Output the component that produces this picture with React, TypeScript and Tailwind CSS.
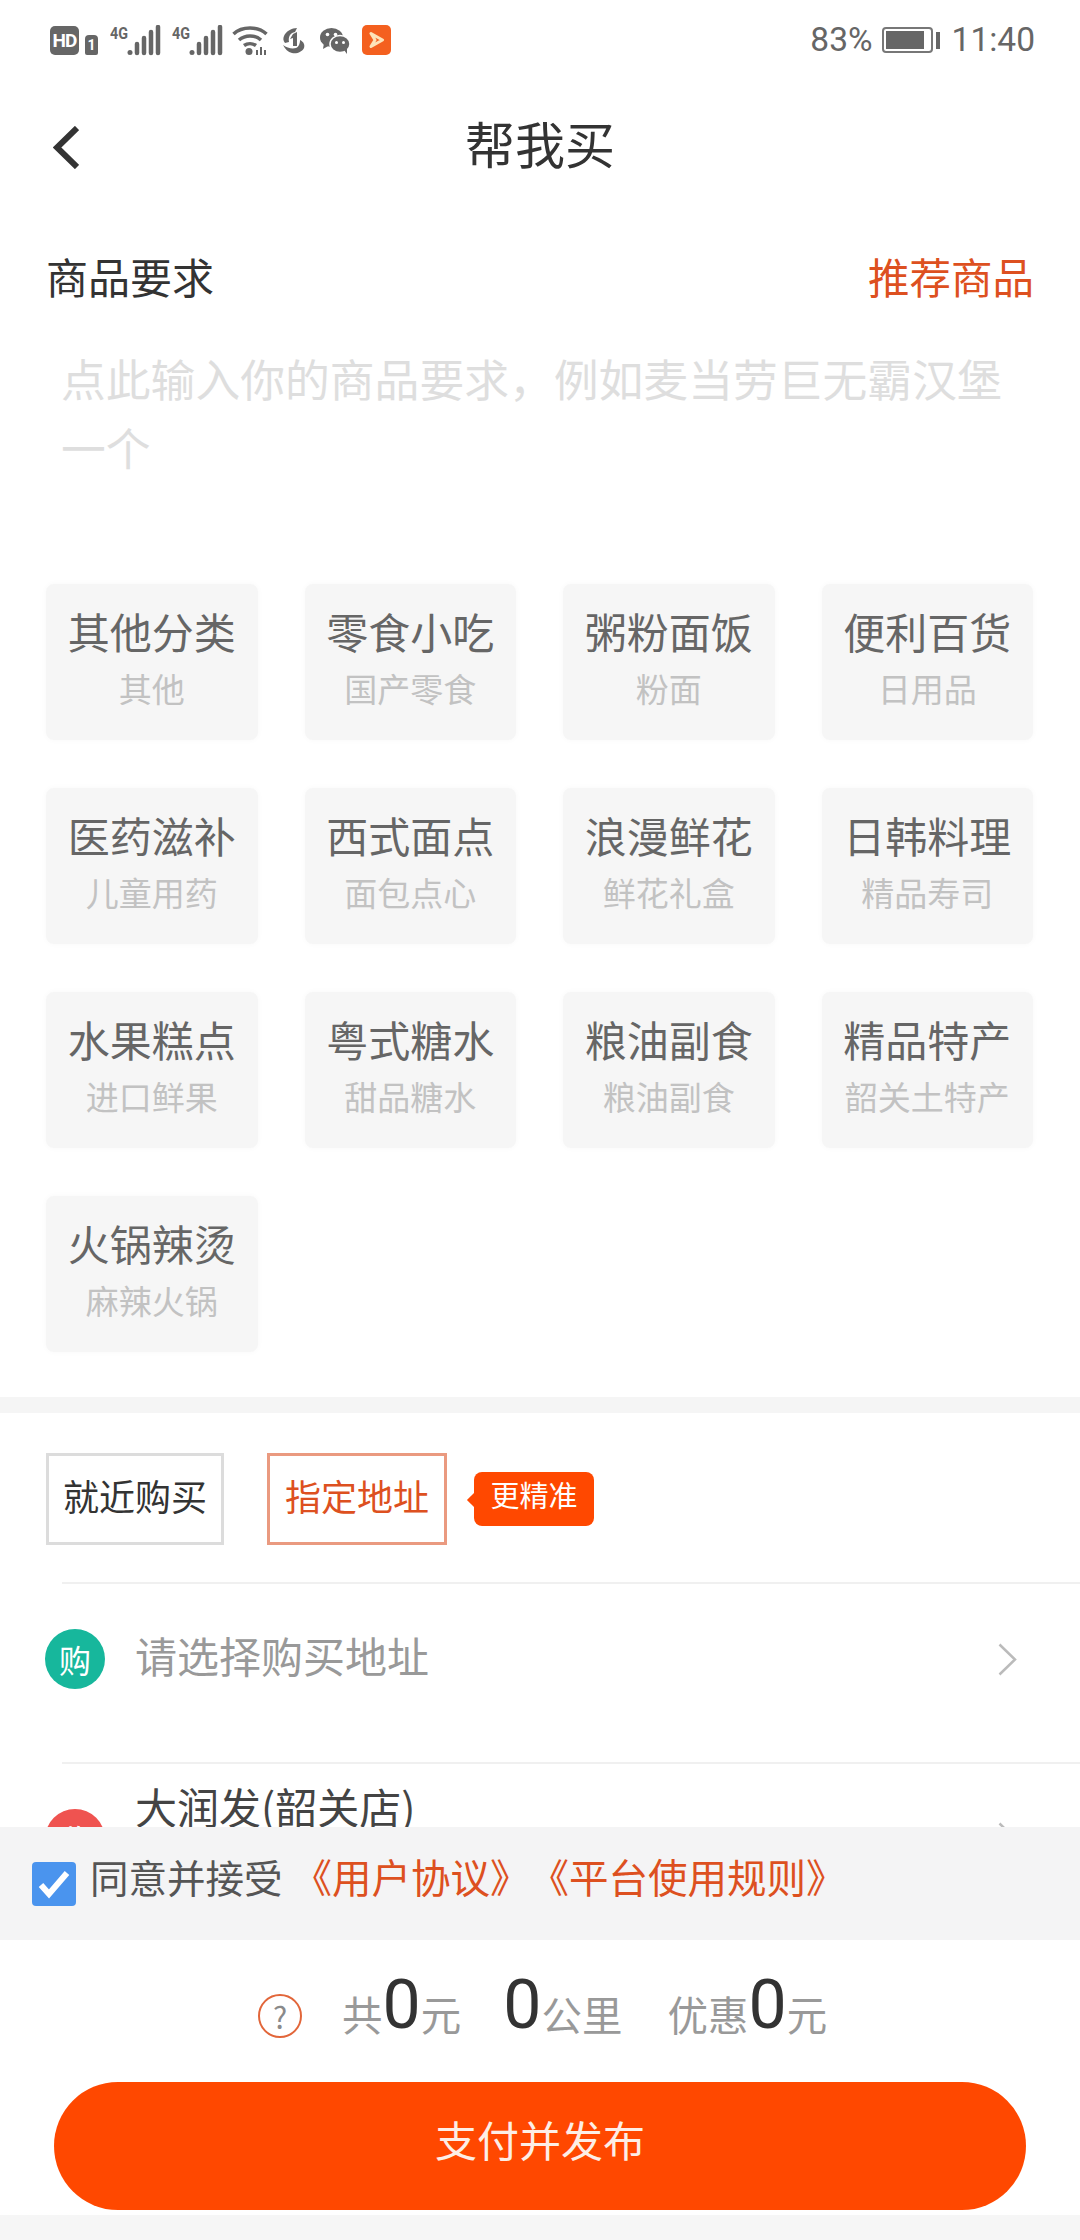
import React from 'react';

const CJK = "font-['Noto_Sans_CJK_SC','Noto_Sans',sans-serif]";

const categories = [
  ['其他分类', '其他'],
  ['零食小吃', '国产零食'],
  ['粥粉面饭', '粉面'],
  ['便利百货', '日用品'],
  ['医药滋补', '儿童用药'],
  ['西式面点', '面包点心'],
  ['浪漫鲜花', '鲜花礼盒'],
  ['日韩料理', '精品寿司'],
  ['水果糕点', '进口鲜果'],
  ['粤式糖水', '甜品糖水'],
  ['粮油副食', '粮油副食'],
  ['精品特产', '韶关土特产'],
  ['火锅辣烫', '麻辣火锅'],
];

function Signal() {
  return (
    <svg width="52" height="31" viewBox="0 0 52 31" className="shrink-0">
      <text x="0" y="14" fontSize="17" fontWeight="700" fill="#666" fontFamily="Roboto" textLength="18" lengthAdjust="spacingAndGlyphs">4G</text>
      <circle cx="20" cy="27.500" r="2.500" fill="#666" />
      <path d="M27 19 V28 M34 13 V28 M41 7 V28 M48 2 V28" stroke="#666" strokeWidth="4.500" strokeLinecap="round" />
    </svg>
  );
}

function StatusIcons() {
  return (
    <div className="flex items-center">
      <div className="flex h-[29px] w-[29px] items-center justify-center rounded-[5px] bg-[#666] font-['Roboto'] text-[19px] font-bold leading-none tracking-[-1px] text-white">HD</div>
      <div className="ml-[6px] mt-[9px] flex h-[20px] w-[13px] items-center justify-center rounded-t-[4px] rounded-b-[2px] bg-[#666] font-['Roboto'] text-[14px] font-bold leading-none text-white">1</div>
      <div className="ml-[12px] flex gap-[10px]">
        <Signal />
        <Signal />
      </div>
      {/* wifi with up/down arrows */}
      <svg width="36" height="31" viewBox="0 0 36 31" className="ml-[8px] shrink-0">
        <path d="M1.500 9 C10 1 26 1 34.500 9" fill="none" stroke="#666" strokeWidth="3.500" />
        <path d="M7 15 C13 9.500 23 9.500 29 15" fill="none" stroke="#666" strokeWidth="3.500" />
        <path d="M12 20.500 C15.500 18 20.500 18 24 20.500" fill="none" stroke="#666" strokeWidth="3.500" />
        <circle cx="17" cy="26.500" r="3.500" fill="#666" />
        <path d="M25 30 V25 M29 30 V22 M33 30 V25" stroke="#666" strokeWidth="2" />
      </svg>
      {/* round app logo */}
      <svg width="23" height="26" viewBox="0 0 23 26" className="ml-[14px] mt-[1px] shrink-0">
        <path d="M2 8 C4 3 10 0 15 0 L13 4 C8 5 6 9 7 14 L3 15 C1 13 1 10 2 8 Z" fill="#666" />
        <path d="M11 6 L15 4 V18 H11 V10 L8 11 Z" fill="#666" />
        <path d="M1 17 C5 20 10 21 14 20 C17 19 18 15 18 12 C22 14 23 17 22 20 C20 24 15 26 10 25 C6 24 3 21 1 17 Z" fill="#666" />
      </svg>
      {/* wechat */}
      <svg width="30" height="26" viewBox="0 0 30 26" className="ml-[15px] mt-[2px] shrink-0">
        <ellipse cx="11.500" cy="9.500" rx="11.500" ry="9.500" fill="#666" />
        <path d="M4 15 L3 21 L10 17 Z" fill="#666" />
        <ellipse cx="20" cy="16" rx="10" ry="8.500" fill="#666" stroke="#fff" strokeWidth="1.500" />
        <path d="M24 22 L27 26 L27 19 Z" fill="#666" />
        <circle cx="7.500" cy="6.500" r="1.800" fill="#fff" />
        <circle cx="15.500" cy="6.500" r="1.800" fill="#fff" />
        <circle cx="16.500" cy="14.500" r="1.500" fill="#fff" />
        <circle cx="23.500" cy="14.500" r="1.500" fill="#fff" />
      </svg>
      {/* orange video app */}
      <div className="ml-[12px] flex h-[30px] w-[29px] items-center justify-center rounded-[5px] bg-[#f4601f]">
        <svg width="16" height="18" viewBox="0 0 16 18">
          <path d="M2 2.500 L13.500 9 L2 15.500 L6 9 Z" fill="none" stroke="#fde3b8" strokeWidth="3" strokeLinejoin="round" />
        </svg>
      </div>
    </div>
  );
}

function StatusBar() {
  return (
    <div className="flex h-[80px] items-center justify-between pl-[50px] pr-[45px]">
      <StatusIcons />
      <div className="flex items-center font-['Roboto'] text-[33.500px] text-[#666]">
        <span>83%</span>
        <div className="ml-[9px] flex h-[26px] w-[51px] items-center rounded-[4px] border-2 border-[#777] p-[2px]">
          <div className="h-full w-[38px] bg-[#666]" />
        </div>
        <div className="ml-[3px] h-[17px] w-[4px] bg-[#666]" />
        <span className="ml-[12px]">11:40</span>
      </div>
    </div>
  );
}

function CategoryCard({ title, sub }: { title: string; sub: string }) {
  return (
    <div className="flex h-[156px] flex-col items-center rounded-lg bg-[#f6f6f6] pt-[17px] shadow-[0_0_6px_#f8f8f8]">
      <div className="whitespace-nowrap text-[42px] leading-[60px] text-[#666]">{title}</div>
      <div className="mt-[-1px] whitespace-nowrap text-[33px] leading-[56px] text-[#c2c2c2]">{sub}</div>
    </div>
  );
}

function RowChevron() {
  return (
    <svg width="19" height="33" viewBox="0 0 19 33" className="ml-auto shrink-0">
      <path d="M1.500 1.500 L17 16.500 L1.500 31.500" fill="none" stroke="#bbb" strokeWidth="2.500" />
    </svg>
  );
}

export default function App() {
  return (
    <div className={`flex h-[2240px] w-[1080px] flex-col overflow-hidden bg-white ${CJK}`}>
      <main className="min-h-0 flex-1 overflow-hidden">
        <StatusBar />

        {/* Title bar */}
        <div className="grid h-[126px] grid-cols-[1fr_auto_1fr] items-center pl-[53px]">
          <svg width="26" height="43" viewBox="0 0 26 43" className="mt-[8px]">
            <path d="M24 2 L4 21.500 L24 41" fill="none" stroke="#333" strokeWidth="6" />
          </svg>
          <div className="mb-[2px] ml-[-53px] text-[50px] leading-none text-[#333]">帮我买</div>
        </div>

        {/* Requirement input */}
        <div className="flex items-center justify-between pl-[46px] pr-[46px] pt-[39px]">
          <span className="text-[42px] leading-[62px] text-[#333]">商品要求</span>
          <span className="text-[41.500px] leading-[62px] text-[#dd5020]">推荐商品</span>
        </div>
        <div className="ml-[61px] mt-[36px] w-[960px] text-[44.800px] leading-[69px] text-[#dedede]">
          点此输入你的商品要求，例如麦当劳巨无霸汉堡一个
        </div>

        {/* Category grid */}
        <div className="mt-[103px] grid grid-cols-4 gap-x-[47px] gap-y-[48px] pl-[46px] pr-[47px]">
          {categories.map(([title, sub]) => (
            <CategoryCard key={title} title={title} sub={sub} />
          ))}
        </div>

        <div className="mt-[45px] h-[16px] bg-[#f5f5f5]" />

        {/* Buy mode */}
        <div className="flex items-center pl-[46px] pt-[40px]">
          <div className="flex h-[92px] w-[178px] items-center justify-center border-[3px] border-[#dcdcdc] pb-[8px] text-[36px] text-[#333]">就近购买</div>
          <div className="ml-[43px] flex h-[92px] w-[180px] items-center justify-center border-[3px] border-[#ea9a80] pb-[8px] text-[36px] text-[#dd5020]">指定地址</div>
          <div className="relative ml-[27px] flex h-[54px] w-[120px] items-center justify-center rounded-[8px] bg-[#ff4800] pb-[8px] text-[29px] text-white">
            <div className="absolute left-[-5px] top-[23px] h-[10px] w-[10px] rotate-45 bg-[#ff4800]" />
            更精准
          </div>
        </div>

        <div className="ml-[62px] mt-[37px] h-[2px] bg-[#f0f0f0]" />

        {/* Address rows */}
        <div className="h-[178px] pl-[45px] pr-[63px] pt-[45px]">
          <div className="flex h-[60px] items-center">
            <div className="flex h-[60px] w-[60px] shrink-0 items-center justify-center rounded-full bg-[#17b79c] text-[32px] text-white">购</div>
            <div className="ml-[30px] mt-[-10px] text-[42px] text-[#999]">请选择购买地址</div>
            <RowChevron />
          </div>
        </div>
        <div className="ml-[62px] h-[2px] bg-[#f0f0f0]" />
        <div className="flex items-start pl-[45px] pr-[63px]">
          <div className="mt-[45px] flex h-[60px] w-[60px] shrink-0 items-center justify-center rounded-full bg-[#ef5350] text-[32px] leading-none text-white">收</div>
          <div className="ml-[30px] mt-[12px] whitespace-nowrap text-[42px] leading-[60px] text-[#444]">大润发(韶关店)</div>
          <div className="ml-auto mt-[58px] flex">
            <RowChevron />
          </div>
        </div>
      </main>

      {/* Agreement bar */}
      <div className="flex h-[113px] shrink-0 items-start bg-[#f4f4f5] pl-[32px] pt-[35px]">
        <div className="h-[44px] w-[44px] shrink-0 rounded-[4px] bg-[#4a94ee]">
          <svg width="44" height="44" viewBox="0 0 44 44">
            <path d="M9 23 L17 32 L35 11" fill="none" stroke="#fff" strokeWidth="6" />
          </svg>
        </div>
        <span className="ml-[14px] mt-[-14px] text-[38.500px] leading-[56px] text-[#555]">同意并接受</span>
        <span className="ml-[10px] mt-[-14px] whitespace-nowrap text-[39.500px] leading-[56px] text-[#dd5020]">《用户协议》</span>
        <span className="mt-[-14px] whitespace-nowrap text-[39.500px] leading-[56px] text-[#dd5020]">《平台使用规则》</span>
      </div>

      {/* Totals and submit */}
      <div className="h-[275px] shrink-0 bg-white">
        <div className="flex h-[142px] items-end pb-[45px] pl-[258px] text-[40.500px] leading-[46px] text-[#999]">
          <div className="mb-[-1px] mr-[40px] flex h-[44px] w-[44px] items-center justify-center rounded-full border-2 border-[#e2663a] text-[30px] leading-none text-[#8a8a8a]">?</div>
          <span>共</span>
          <span className="mb-[2px] font-['Roboto'] text-[68px] leading-[60px] text-[#333]">0</span>
          <span>元</span>
          <span className="mb-[2px] ml-[42px] font-['Roboto'] text-[68px] leading-[60px] text-[#333]">0</span>
          <span>公里</span>
          <span className="ml-[45px]">优惠</span>
          <span className="mb-[2px] font-['Roboto'] text-[68px] leading-[60px] text-[#333]">0</span>
          <span>元</span>
        </div>
        <div className="ml-[54px] flex h-[128px] w-[972px] items-center justify-center rounded-full bg-[#ff4800] pb-[16px] text-[42px] text-[#fdeee6]">支付并发布</div>
      </div>

      <div className="h-[25px] shrink-0 bg-[#f6f6f6]" />
    </div>
  );
}
